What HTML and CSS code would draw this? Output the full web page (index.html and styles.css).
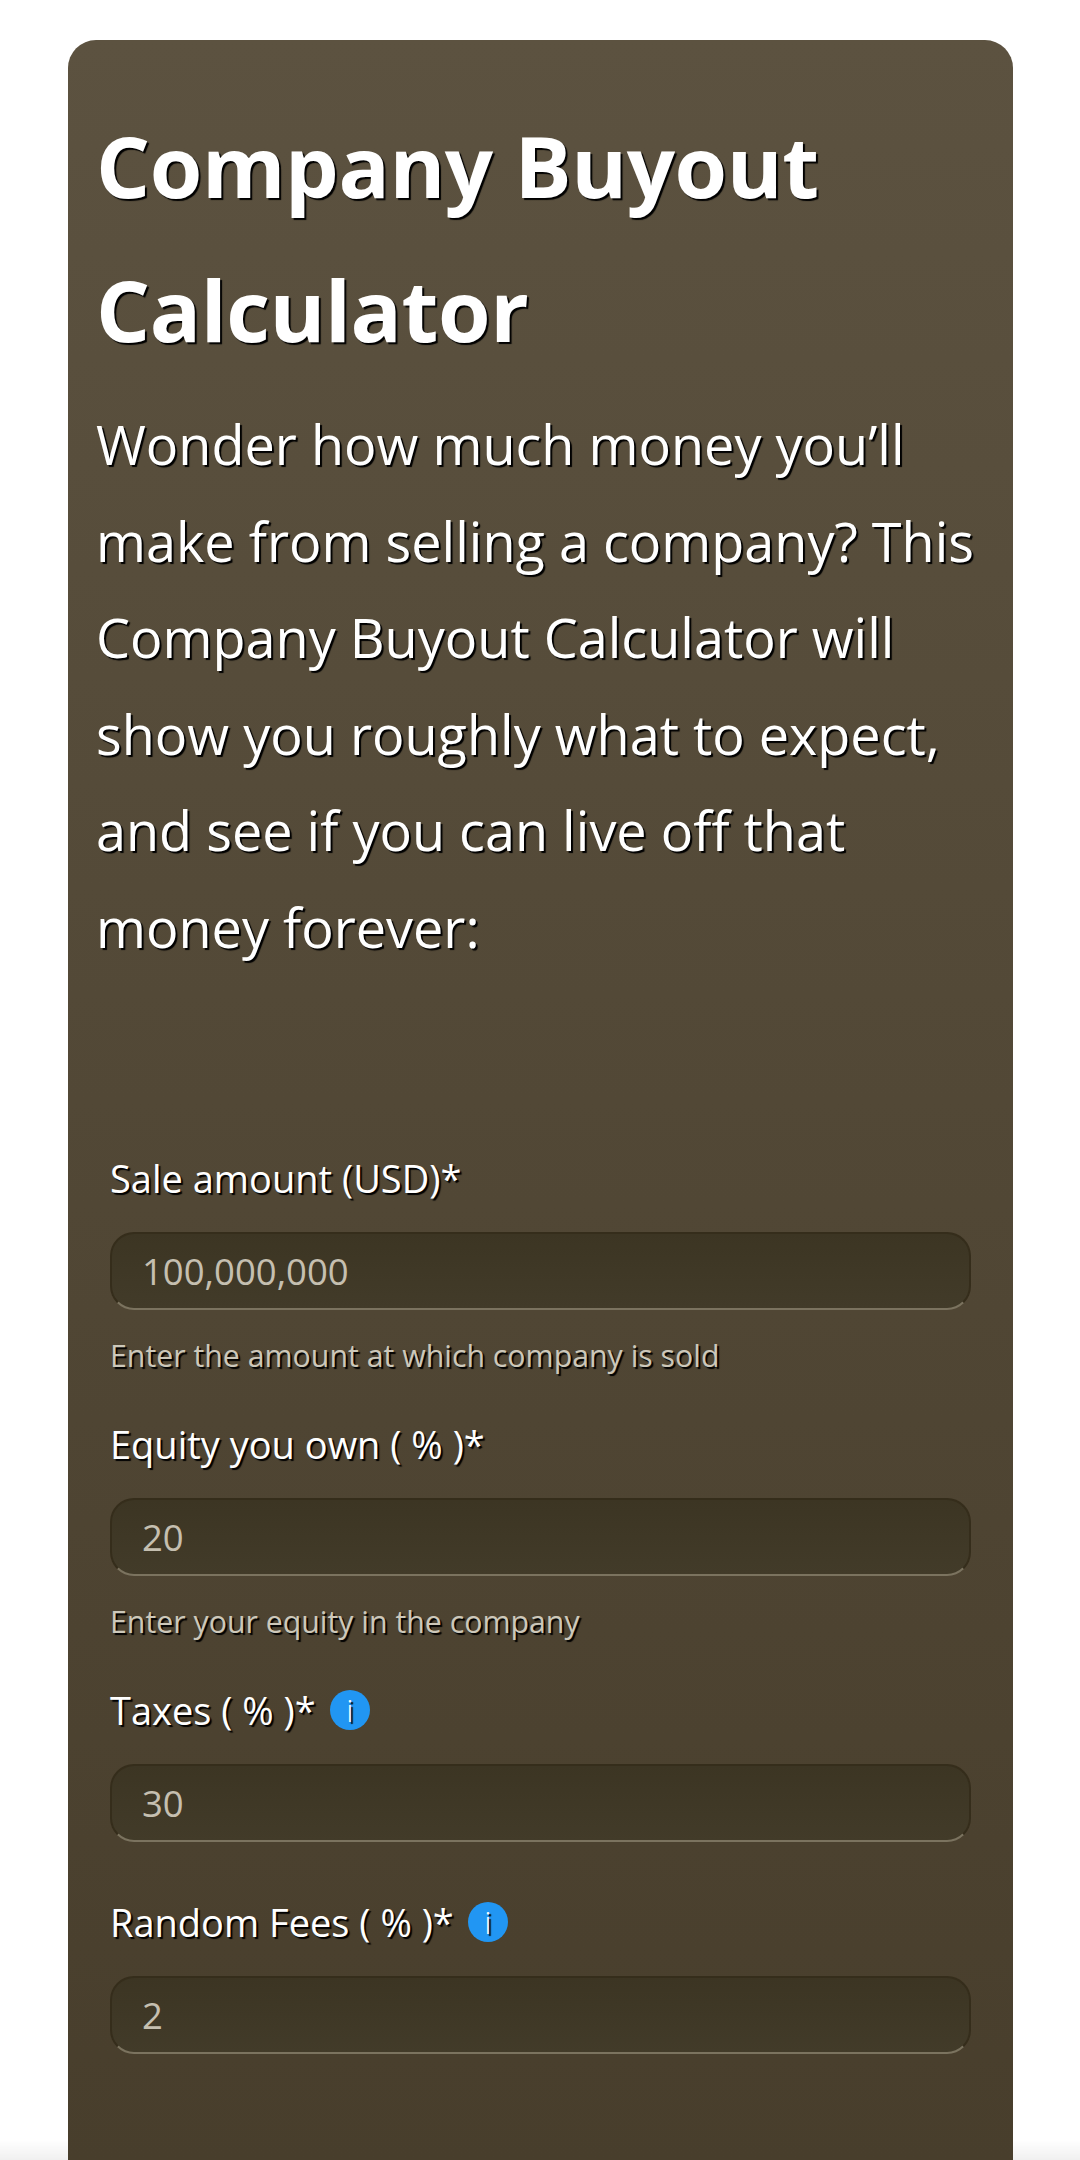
FILE: index.html
```html
<!DOCTYPE html>
<html lang="en">
<head>
  <meta charset="UTF-8" />
  <title>Company Buyout Calculator</title>
  <link rel="stylesheet" href="styles.css">
</head>
<body>
  <div class="card">
    <h1>Company Buyout Calculator</h1>
    <p class="intro">Wonder how much money you’ll make from selling a company? This Company Buyout Calculator will show you roughly what to expect, and see if you can live off that money forever:</p>
    <form class="calc-form">
      <div class="field">
        <label for="sale">Sale amount (USD)*</label>
        <input type="text" id="sale" placeholder="100,000,000">
        <p class="hint">Enter the amount at which company is sold</p>
      </div>
      <div class="field">
        <label for="equity">Equity you own ( % )*</label>
        <input type="text" id="equity" placeholder="20">
        <p class="hint">Enter your equity in the company</p>
      </div>
      <div class="field">
        <label for="taxes">Taxes ( % )* <span class="info">i</span></label>
        <input type="text" id="taxes" placeholder="30">
      </div>
      <div class="field">
        <label for="fees">Random Fees ( % )* <span class="info">i</span></label>
        <input type="text" id="fees" placeholder="2">
      </div>
    </form>
  </div>
  <div class="bottom-fade"></div>
</body>
</html>
```
FILE: styles.css
```css
html, body {
  height: 2160px;
  overflow: hidden;
}

body {
  margin: 0;
  background: #fff;
  font-family: "Open Sans", "Noto Sans", sans-serif;
  color: #fff;
}

.card {
  position: relative;
  z-index: 1;
  box-sizing: border-box;
  width: 945px;
  height: 2200px;
  margin: 40px 0 0 68px;
  padding: 53px 28px 0;
  border-radius: 28px;
  background: linear-gradient(#5c5240, #483e2c 2120px);
  text-shadow: 2px 2px 1px #000;
}

h1 {
  margin: 0;
  font-size: 85px;
  font-weight: 700;
  line-height: 144px;
  letter-spacing: -0.4px;
}

.intro {
  margin: 15px 0 0;
  font-size: 54px;
  line-height: 96.5px;
}

.calc-form {
  margin-top: 177px;
  padding: 0 14px;
}

.field {
  margin-bottom: 54px;
}

label {
  display: flex;
  align-items: center;
  gap: 14px;
  font-size: 38px;
  line-height: 52px;
  margin-bottom: 28px;
}

input {
  display: block;
  box-sizing: border-box;
  width: 100%;
  height: 78px;
  padding: 0 30px;
  border: 2px solid #352d1b;
  border-bottom-color: #7b735f;
  border-radius: 24px;
  background: linear-gradient(#3c3523, #423b29);
  font-family: inherit;
  font-size: 36.5px;
  outline: none;
}

input::placeholder {
  color: #c5bfb0;
  opacity: 1;
}

.hint {
  margin: 22px 0 -16px;
  font-size: 30.3px;
  line-height: 48px;
  color: #cdc8ba;
}

.info {
  display: flex;
  align-items: center;
  justify-content: center;
  width: 40px;
  height: 40px;
  border-radius: 50%;
  background: #2196f3;
  font-size: 32px;
  font-weight: 300;
  line-height: 1;
}

.bottom-fade {
  position: fixed;
  left: 0;
  right: 0;
  bottom: 0;
  height: 20px;
  background: linear-gradient(rgba(0, 0, 0, 0), rgba(0, 0, 0, 0.06));
}
```
